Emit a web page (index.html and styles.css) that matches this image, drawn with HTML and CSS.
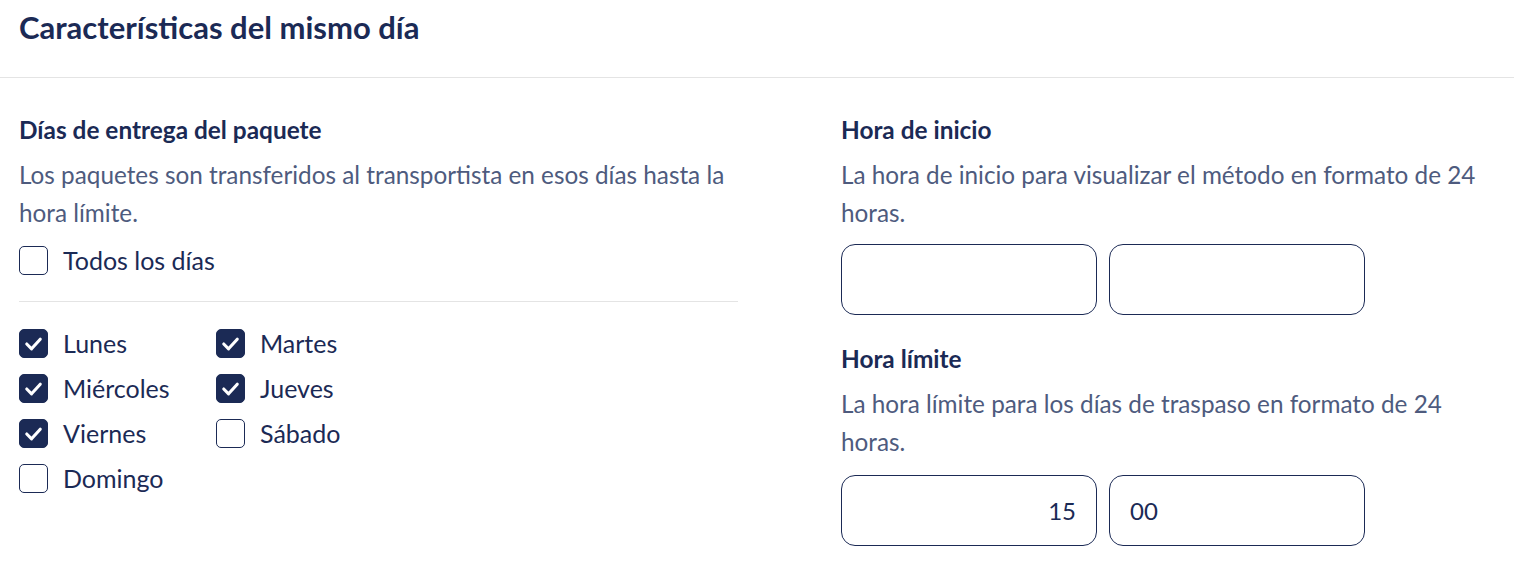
FILE: index.html
```html
<!DOCTYPE html>
<html lang="es">
<head>
<meta charset="utf-8">
<title>Características del mismo día</title>
<link rel="stylesheet" href="styles.css">
</head>
<body>
<header class="header">
  <h1 class="title">Características del mismo día</h1>
</header>
<main class="content">
  <section class="col">
    <h2 class="heading">Días de entrega del paquete</h2>
    <p class="desc">Los paquetes son transferidos al transportista en esos días hasta la hora límite.</p>
    <label class="check check-all"><span class="box"></span><span class="label">Todos los días</span></label>
    <hr class="divider">
    <div class="days">
      <label class="check"><span class="box on"><svg viewBox="0 0 28 28"><path d="M7 14.5l5 5 9-10"/></svg></span><span class="label">Lunes</span></label>
      <label class="check"><span class="box on"><svg viewBox="0 0 28 28"><path d="M7 14.5l5 5 9-10"/></svg></span><span class="label">Martes</span></label>
      <label class="check"><span class="box on"><svg viewBox="0 0 28 28"><path d="M7 14.5l5 5 9-10"/></svg></span><span class="label">Miércoles</span></label>
      <label class="check"><span class="box on"><svg viewBox="0 0 28 28"><path d="M7 14.5l5 5 9-10"/></svg></span><span class="label">Jueves</span></label>
      <label class="check"><span class="box on"><svg viewBox="0 0 28 28"><path d="M7 14.5l5 5 9-10"/></svg></span><span class="label">Viernes</span></label>
      <label class="check"><span class="box"></span><span class="label">Sábado</span></label>
      <label class="check"><span class="box"></span><span class="label">Domingo</span></label>
    </div>
  </section>
  <section class="col">
    <h2 class="heading">Hora de inicio</h2>
    <p class="desc">La hora de inicio para visualizar el método en formato de 24 horas.</p>
    <div class="time">
      <div class="field right"></div>
      <div class="field"></div>
    </div>
    <h2 class="heading heading-next">Hora límite</h2>
    <p class="desc">La hora límite para los días de traspaso en formato de 24 horas.</p>
    <div class="time time-last">
      <div class="field right">15</div>
      <div class="field">00</div>
    </div>
  </section>
</main>
</body>
</html>
```

FILE: styles.css
```css
* { box-sizing: border-box; }
body {
  margin: 0;
  background: #fff;
  font-family: Lato, "Open Sans", sans-serif;
  color: #1b2a55;
}
.header {
  height: 78px;
  padding: 8px 19px 0;
  border-bottom: 1px solid #e4e4e4;
}
.title {
  margin: 0;
  font-size: 31px;
  line-height: 38px;
  font-weight: 700;
  color: #1b2a55;
}
.content {
  display: grid;
  grid-template-columns: 719px 1fr;
  column-gap: 103px;
  padding: 38px 19px 0;
}
.col { display: flex; flex-direction: column; }
.heading {
  margin: 0;
  font-size: 24.4px;
  line-height: 28px;
  font-weight: 700;
  color: #1b2a55;
}
.heading-next { margin-top: 30px; }
.desc {
  margin: 12px 0 0;
  font-size: 24.3px;
  line-height: 37.5px;
  color: #4e5b7e;
}
.check {
  display: flex;
  align-items: center;
  gap: 15px;
  height: 28px;
}
.check-all { margin-top: 15px; }
.box {
  width: 29px;
  height: 29px;
  flex: none;
  border: 1.5px solid #1b2a55;
  border-radius: 5px;
  display: flex;
}
.box.on { background: #1b2a55; }
.box svg { width: 100%; height: 100%; }
.box path {
  fill: none;
  stroke: #fff;
  stroke-width: 3.2;
  stroke-linecap: round;
  stroke-linejoin: round;
}
.label {
  font-size: 25px;
  line-height: 28px;
  color: #1b2a55;
}
.divider {
  margin: 27px 0 27px;
  border: 0;
  border-top: 1px solid #e4e4e4;
  height: 0;
}
.days {
  display: grid;
  grid-template-columns: 197px 197px;
  grid-auto-rows: 28px;
  row-gap: 17px;
}
.time {
  display: flex;
  gap: 12px;
  margin-top: 13px;
}
.time-last { margin-top: 15px; }
.field {
  width: 256px;
  height: 71px;
  border: 1px solid #1b2a55;
  border-radius: 14px;
  padding: 0 20px;
  display: flex;
  align-items: center;
  font-size: 24px;
  color: #1b2a55;
}
.field.right { justify-content: flex-end; }
```
